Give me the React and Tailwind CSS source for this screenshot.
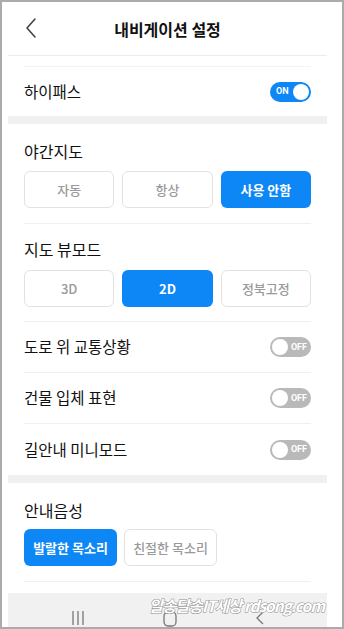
import React, { useState } from "react";

const font = { fontFamily: '"Noto Sans CJK KR", "Noto Sans", sans-serif' };

function Toggle({ on, onClick }) {
  if (on) {
    return (
      <button
        onClick={onClick}
        className="relative w-[41px] h-[20px] rounded-full bg-[#0d86f6] flex items-center"
      >
        <span className="ml-[6px] text-[9px] font-bold text-white leading-none" style={{ fontFamily: "Roboto, sans-serif" }}>
          ON
        </span>
        <span className="absolute right-[2px] top-[2px] w-[16px] h-[16px] rounded-full bg-white" />
      </button>
    );
  }
  return (
    <button
      onClick={onClick}
      className="relative w-[41px] h-[20px] rounded-full bg-[#b9b9b9] flex items-center justify-end"
    >
      <span className="mr-[4px] text-[9px] font-bold text-white leading-none" style={{ fontFamily: "Roboto, sans-serif" }}>
        OFF
      </span>
      <span className="absolute left-[2px] top-[2px] w-[16px] h-[16px] rounded-full bg-white" />
    </button>
  );
}

function Choice({ label, active, onClick, className = "" }) {
  return (
    <button
      onClick={onClick}
      className={
        "h-[37px] rounded-[6px] text-[13px] " +
        (active
          ? "bg-[#0d86f6] text-white font-bold "
          : "bg-white border border-[#e2e2e2] text-[#9a9a9a] font-medium ") +
        className
      }
    >
      {label}
    </button>
  );
}

function SwitchRow({ label, on, onToggle, last }) {
  return (
    <div className="mx-4">
      <div className={"h-[51px] flex items-center justify-between " + (last ? "" : "border-b border-[#f0f0f0]")}>
        <span className="text-[15.5px] text-[#111]">{label}</span>
        <Toggle on={on} onClick={onToggle} />
      </div>
    </div>
  );
}

export default function App() {
  const [hipass, setHipass] = useState(true);
  const [night, setNight] = useState("사용 안함");
  const [view, setView] = useState("2D");
  const [traffic, setTraffic] = useState(false);
  const [building, setBuilding] = useState(false);
  const [mini, setMini] = useState(false);
  const [voice, setVoice] = useState("발랄한 목소리");

  return (
    <div className="w-[344px] h-[629px] border-2 border-[#ababab] bg-white overflow-hidden relative" style={font}>
      <div className="mx-[6px] w-[319px] h-full flex flex-col">
        {/* header */}
        <div className="h-[54px] shrink-0 border-b border-[#ececec] relative flex items-center justify-center">
          <svg className="absolute left-[17px] top-[15px]" width="12" height="22" viewBox="0 0 12 22" fill="none">
            <path d="M10 2 L2 11 L10 20" stroke="#444" strokeWidth="1.6" strokeLinecap="round" strokeLinejoin="round" />
          </svg>
          <span className="text-[16px] font-bold text-[#111]">내비게이션 설정</span>
        </div>

        <div className="h-[10px] shrink-0" />
        <div className="mx-4 border-t border-[#f3f3f3]">
          <div className="h-[49px] flex items-center justify-between">
            <span className="text-[15.5px] text-[#111]">하이패스</span>
            <Toggle on={hipass} onClick={() => setHipass(!hipass)} />
          </div>
        </div>

        <div className="h-2 shrink-0 bg-[#f0f0f0]" />

        {/* 야간지도 */}
        <div className="mx-4 pt-[15px] pb-[15px] border-b border-[#f0f0f0]">
          <div className="text-[16px] leading-[24px] text-[#111]">야간지도</div>
          <div className="grid grid-cols-3 gap-2 mt-2">
            {["자동", "항상", "사용 안함"].map((l) => (
              <Choice key={l} label={l} active={night === l} onClick={() => setNight(l)} />
            ))}
          </div>
        </div>

        {/* 지도 뷰모드 */}
        <div className="mx-4 pt-[13px] pb-[14px] border-b border-[#f0f0f0]">
          <div className="text-[16px] leading-[24px] text-[#111]">지도 뷰모드</div>
          <div className="grid grid-cols-3 gap-2 mt-[9px]">
            {["3D", "2D", "정북고정"].map((l) => (
              <Choice
                key={l}
                label={l}
                active={view === l}
                onClick={() => setView(l)}
                className={l.endsWith("D") ? "font-bold" : ""}
              />
            ))}
          </div>
        </div>

        <SwitchRow label="도로 위 교통상황" on={traffic} onToggle={() => setTraffic(!traffic)} />
        <SwitchRow label="건물 입체 표현" on={building} onToggle={() => setBuilding(!building)} />
        <SwitchRow label="길안내 미니모드" on={mini} onToggle={() => setMini(!mini)} last />

        <div className="h-2 shrink-0 bg-[#f0f0f0]" />

        {/* 안내음성 */}
        <div className="mx-4 pt-[15px] pb-[15px] border-b border-[#f0f0f0]">
          <div className="text-[16px] leading-[24px] text-[#111]">안내음성</div>
          <div className="flex gap-[7px] mt-[7px]">
            {["발랄한 목소리", "친절한 목소리"].map((l) => (
              <Choice
                key={l}
                label={l}
                active={voice === l}
                onClick={() => setVoice(l)}
                className="w-[93px]"
              />
            ))}
          </div>
        </div>

        <div className="flex-1" />

        {/* system nav bar */}
        <div className="h-[34px] shrink-0 bg-[#f1f1f1] flex items-start justify-around px-6 pt-[18px]">
          <svg width="14" height="14" viewBox="0 0 14 14">
            <path d="M2 0 V14 M7 0 V14 M12 0 V14" stroke="#777" strokeWidth="1.3" />
          </svg>
          <svg width="14" height="16" viewBox="0 0 14 16" fill="none">
            <rect x="1" y="1" width="12" height="14" rx="4" stroke="#777" strokeWidth="1.3" />
          </svg>
          <svg width="8" height="14" viewBox="0 0 8 14" fill="none">
            <path d="M7 1 L1 7 L7 13" stroke="#777" strokeWidth="1.3" />
          </svg>
        </div>
      </div>

      {/* watermark */}
      <div
        className="absolute left-[147px] top-[592px] whitespace-nowrap text-[15.5px] font-bold italic text-white tracking-[-1px] [-webkit-text-stroke:1px_#8a8a8a] [paint-order:stroke_fill]"
        style={font}
      >
        알송달송IT세상 rdsong.com
      </div>
    </div>
  );
}
